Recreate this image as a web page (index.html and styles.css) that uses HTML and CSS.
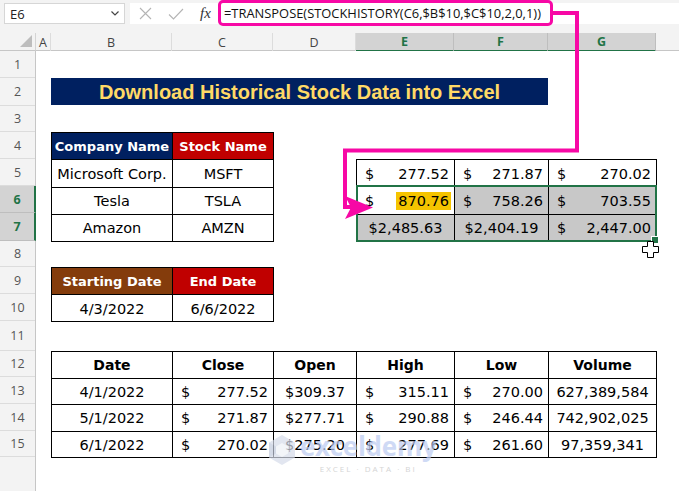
FILE: index.html
```html
<!DOCTYPE html>
<html>
<head>
<meta charset="utf-8">
<link rel="stylesheet" href="styles.css">
</head>
<body>
<div class="app">
  <div class="fbar">
    <div class="namebox"><span>E6</span>
      <svg class="chev" width="8" height="5" viewBox="0 0 8 5"><path d="M0.5 0.5 L4 4 L7.5 0.5" fill="none" stroke="#444" stroke-width="1.2"/></svg>
    </div>
    <div class="fwrap">
      <div class="ficons">
        <svg class="ico-x" width="13" height="13" viewBox="0 0 13 13"><path d="M1 1 L12 12 M12 1 L1 12" stroke="#b4b4b4" stroke-width="1.1" fill="none"/></svg>
        <svg class="ico-ok" width="16" height="12" viewBox="0 0 16 12"><path d="M1 6.5 L5.5 11 L15 1" stroke="#b4b4b4" stroke-width="1.1" fill="none"/></svg>
        <span class="fx">fx</span>
      </div>
      <div class="formula">=TRANSPOSE(STOCKHISTORY(C6,$B$10,$C$10,2,0,1))</div>
    </div>
  </div>

  <div class="sheet">
    <div class="corner"><span class="tri"></span></div>
    <div class="colheads">
      <div class="ch">A</div>
      <div class="ch">B</div>
      <div class="ch">C</div>
      <div class="ch">D</div>
      <div class="ch ch-sel">E</div>
      <div class="ch ch-sel">F</div>
      <div class="ch ch-sel">G</div>
      <div class="ch ch-fill"></div>
    </div>
    <div class="rowheads">
      <div class="rh">1</div>
      <div class="rh">2</div>
      <div class="rh">3</div>
      <div class="rh">4</div>
      <div class="rh">5</div>
      <div class="rh rh-sel">6</div>
      <div class="rh rh-sel">7</div>
      <div class="rh">8</div>
      <div class="rh">9</div>
      <div class="rh">10</div>
      <div class="rh">11</div>
      <div class="rh">12</div>
      <div class="rh">13</div>
      <div class="rh">14</div>
      <div class="rh">15</div>
      <div class="rh rh-fill"></div>
    </div>
    <div class="cells">
      <div class="title">Download Historical Stock Data into Excel</div>

      <div class="tbl t-company">
        <div class="c hd hd-navy">Company Name</div>
        <div class="c hd hd-red">Stock Name</div>
        <div class="c">Microsoft Corp.</div>
        <div class="c">MSFT</div>
        <div class="c">Tesla</div>
        <div class="c">TSLA</div>
        <div class="c">Amazon</div>
        <div class="c">AMZN</div>
      </div>

      <div class="tbl t-dates">
        <div class="c hd hd-brown">Starting Date</div>
        <div class="c hd hd-red">End Date</div>
        <div class="c">4/3/2022</div>
        <div class="c">6/6/2022</div>
      </div>

      <div class="tbl t-stock">
        <div class="c acc"><span>$</span><span>277.52</span></div>
        <div class="c acc"><span>$</span><span>271.87</span></div>
        <div class="c acc"><span>$</span><span>270.02</span></div>
        <div class="c acc"><span>$</span><span class="hl">870.76</span></div>
        <div class="c acc sel"><span>$</span><span>758.26</span></div>
        <div class="c acc sel"><span>$</span><span>703.55</span></div>
        <div class="c sel">$2,485.63</div>
        <div class="c sel">$2,404.19</div>
        <div class="c acc sel"><span>$</span><span>2,447.00</span></div>
      </div>
      <div class="selection"></div>

      <div class="tbl t-hist">
        <div class="c hd hd-plain">Date</div>
        <div class="c hd hd-plain">Close</div>
        <div class="c hd hd-plain">Open</div>
        <div class="c hd hd-plain">High</div>
        <div class="c hd hd-plain">Low</div>
        <div class="c hd hd-plain">Volume</div>

        <div class="c">4/1/2022</div>
        <div class="c acc"><span>$</span><span>277.52</span></div>
        <div class="c">$309.37</div>
        <div class="c acc"><span>$</span><span>315.11</span></div>
        <div class="c acc"><span>$</span><span>270.00</span></div>
        <div class="c">627,389,584</div>

        <div class="c">5/1/2022</div>
        <div class="c acc"><span>$</span><span>271.87</span></div>
        <div class="c">$277.71</div>
        <div class="c acc"><span>$</span><span>290.88</span></div>
        <div class="c acc"><span>$</span><span>246.44</span></div>
        <div class="c">742,902,025</div>

        <div class="c">6/1/2022</div>
        <div class="c acc"><span>$</span><span>270.02</span></div>
        <div class="c">$275.20</div>
        <div class="c acc"><span>$</span><span>277.69</span></div>
        <div class="c acc"><span>$</span><span>261.60</span></div>
        <div class="c">97,359,341</div>
      </div>
    </div>
  </div>

  <div class="watermark">
    <svg class="wm-logo" width="28" height="32" viewBox="0 0 28 32">
      <path d="M14 1 L27 8.5 L27 23.5 L14 31 L1 23.5 L1 8.5 Z" fill="#d6dcea"/>
      <path d="M14 9 L20 12.5 L20 19.5 L14 23 L8 19.5 L8 12.5 Z" fill="#eef1f7"/>
      <path d="M1 8.5 L8 12.5 L8 19.5 L1 23.5 Z" fill="#c3cbdd"/>
    </svg>
    <div class="wm-text">
      <div class="wm-name">exceldemy</div>
      <div class="wm-sub">EXCEL · DATA · BI</div>
    </div>
  </div>

  <svg class="arrow" width="679" height="491" viewBox="0 0 679 491">
    <path d="M552 13 H577 V150.5 H345 V207 H352" fill="none" stroke="#f708a5" stroke-width="4" stroke-linejoin="miter"/>
    <path d="M345 196 L373 207.5 L345 219 L351 207.5 Z" fill="#f708a5"/>
  </svg>

  <svg class="cursor" width="17" height="17" viewBox="0 0 17 17">
    <path d="M5.5 0.5 H11.5 V5.5 H16.5 V11.5 H11.5 V16.5 H5.5 V11.5 H0.5 V5.5 H5.5 Z" fill="#fff" stroke="#000" stroke-width="1"/>
  </svg>
</div>
</body>
</html>
```

FILE: styles.css
```css
* { box-sizing: border-box; }
html, body { margin: 0; padding: 0; }
body {
  width: 679px;
  height: 491px;
  overflow: hidden;
  background: #fff;
  font-family: "Open Sans", "Noto Sans", sans-serif;
}
.app {
  --cols: 15px 121px 101px 83px 98px 94px 108px 1fr;
  --rows: 27px 28px 26px 27px 27px 27px 28px 26px 27px 27px 30px 26px 27px 27px 26px 1fr;
  position: relative;
  width: 679px;
  height: 491px;
  display: flex;
  flex-direction: column;
}

/* formula bar */
.fbar {
  flex: none;
  height: 33px;
  background: #f3f3f3;
  display: flex;
  align-items: flex-start;
  padding-top: 3px;
}
.namebox {
  margin-left: 4px;
  width: 121px;
  height: 21px;
  background: #fff;
  border: 1px solid #d6d6d6;
  display: flex;
  align-items: center;
  justify-content: space-between;
  padding: 0 5px 0 5px;
  font-size: 13px;
  color: #222;
}
.fwrap {
  margin-left: 5px;
  flex: 1;
  height: 21px;
  background: #fff;
  display: flex;
  align-items: flex-start;
}
.ficons {
  width: 88px;
  height: 21px;
  display: flex;
  align-items: center;
  padding-left: 9px;
}
.ico-x { margin-right: 16px; }
.ico-ok { margin-right: 16px; }
.fx {
  font-family: "Liberation Serif", serif;
  font-style: italic;
  font-size: 15px;
  color: #333;
}
.formula {
  width: 335px;
  height: 26px;
  margin-top: -3px;
  border: 3px solid #f708a5;
  border-radius: 5px;
  background: #fff;
  padding-left: 3px;
  font-size: 12.9px;
  line-height: 20px;
  color: #111;
  white-space: nowrap;
  overflow: hidden;
}

/* sheet */
.sheet {
  flex: 1;
  display: grid;
  grid-template-columns: 36px 1fr;
  grid-template-rows: 18px 1fr;
}
.corner {
  background: #f3f3f3;
  border-right: 1px solid #d4d4d4;
  border-bottom: 1px solid #c6c6c6;
  position: relative;
}
.tri {
  position: absolute;
  right: 3px;
  bottom: 3px;
  width: 0;
  height: 0;
  border-left: 12px solid transparent;
  border-bottom: 12px solid #bdbdbd;
}
.colheads {
  display: grid;
  grid-template-columns: var(--cols);
  background: #f3f3f3;
  border-bottom: 1px solid #c6c6c6;
}
.ch {
  display: flex;
  align-items: center;
  justify-content: center;
  border-right: 1px solid #dcdcdc;
  font-size: 12.5px;
  color: #444;
}
.ch-sel {
  background: #d3d3d3;
  color: #217346;
  font-weight: bold;
  border-bottom: 2px solid #217346;
  margin-bottom: -1px;
  border-right-color: #bebebe;
}
.ch-fill { border-right: none; }
.rowheads {
  display: grid;
  grid-template-rows: var(--rows);
  background: #f3f3f3;
  border-right: 1px solid #c6c6c6;
}
.rh {
  display: flex;
  align-items: center;
  justify-content: center;
  border-bottom: 1px solid #dcdcdc;
  font-size: 12.5px;
  color: #555;
}
.rh-sel {
  background: #d3d3d3;
  color: #217346;
  font-weight: bold;
  border-right: 2px solid #217346;
  margin-right: -1px;
  border-bottom-color: #bebebe;
}
.rh-fill { border-bottom: none; }

.cells {
  display: grid;
  grid-template-columns: var(--cols);
  grid-template-rows: var(--rows);
  background: #fff;
}
.title {
  grid-column: 2 / 7;
  grid-row: 2 / 3;
  margin-bottom: 1px;
  background: #002060;
  color: #ffd966;
  font-family: "Liberation Sans", Arial, sans-serif;
  font-weight: bold;
  font-size: 20px;
  display: flex;
  align-items: center;
  justify-content: center;
  padding-top: 1px;
}

.tbl {
  display: grid;
  gap: 1px;
  background: #000;
  border: 1px solid #000;
  margin: 0 -1px -1px 0;
  font-family: "DejaVu Sans", sans-serif;
  font-size: 14.5px;
  color: #000;
}
.t-company {
  grid-column: 2 / 4;
  grid-row: 4 / 8;
  grid-template-columns: 120px 1fr;
  grid-template-rows: repeat(4, 1fr);
}
.t-dates {
  grid-column: 2 / 4;
  grid-row: 9 / 11;
  grid-template-columns: 120px 1fr;
  grid-template-rows: repeat(2, 1fr);
}
.t-stock {
  grid-column: 5 / 8;
  grid-row: 5 / 8;
  grid-template-columns: 97px 93px 1fr;
  grid-template-rows: repeat(3, 1fr);
}
.t-hist {
  grid-column: 2 / 8;
  grid-row: 12 / 16;
  grid-template-columns: 120px 100px 82px 97px 93px 1fr;
  grid-template-rows: repeat(4, 1fr);
}
.c {
  background: #fff;
  display: flex;
  align-items: center;
  justify-content: center;
  white-space: nowrap;
  overflow: hidden;
  padding-top: 1px;
}
.acc {
  justify-content: space-between;
  padding: 1px 5px 0 8px;
}
.hd {
  font-weight: bold;
  font-size: 13px;
}
.hd-navy { background: #002060; color: #fff; }
.hd-red { background: #c00000; color: #fff; }
.hd-brown { background: #843c0c; color: #fff; }
.hd-plain { font-size: 14px; }
.sel { background: #c8c8c8; }
.hl {
  background: #f5c400;
  padding: 1px 2px;
  margin-right: -2px;
}
.selection {
  grid-column: 5 / 8;
  grid-row: 6 / 8;
  margin: -1px -1px -1px 0;
  border: 2px solid #217346;
  position: relative;
  z-index: 2;
  pointer-events: none;
}
.selection::after {
  content: "";
  position: absolute;
  right: -4px;
  bottom: -4px;
  width: 6px;
  height: 6px;
  background: #217346;
  border: 1px solid #fff;
}

/* overlays */
.watermark {
  position: absolute;
  left: 268px;
  top: 432px;
  display: flex;
  align-items: flex-start;
  gap: 4px;
  opacity: 0.7;
  pointer-events: none;
}
.wm-logo { margin-top: 2px; }
.wm-text { display: flex; flex-direction: column; align-items: center; }
.wm-name {
  font-family: "Open Sans", sans-serif;
  font-weight: bold;
  font-size: 26px;
  line-height: 28px;
  color: #bccbf2;
  letter-spacing: -0.3px;
}
.wm-sub {
  font-family: "Open Sans", sans-serif;
  font-size: 8px;
  letter-spacing: 2px;
  color: #c4c4c4;
  margin-top: 3px;
}
.arrow {
  position: absolute;
  left: 0;
  top: 0;
  pointer-events: none;
  z-index: 5;
}
.cursor {
  position: absolute;
  left: 642px;
  top: 241px;
  z-index: 6;
}
```
